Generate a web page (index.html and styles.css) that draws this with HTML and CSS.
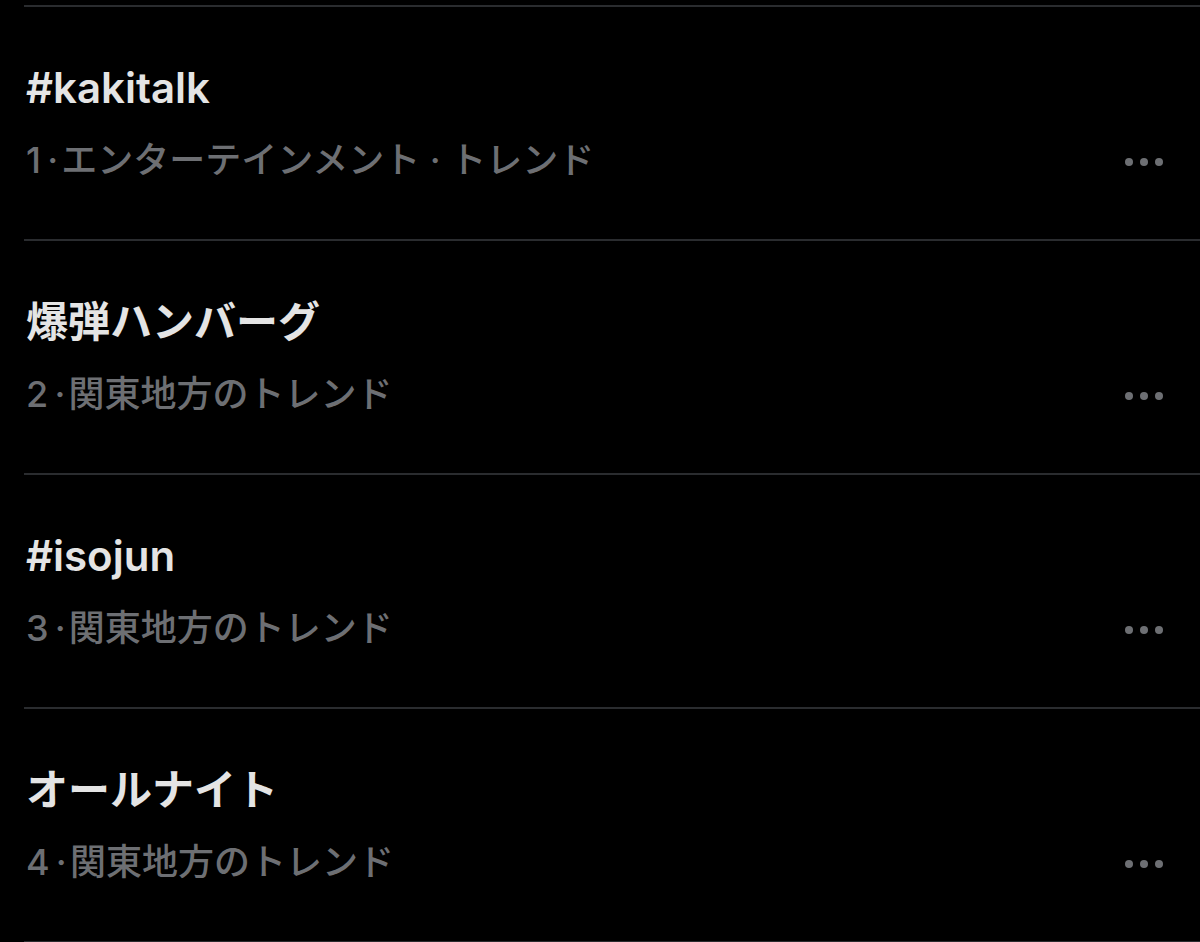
FILE: index.html
```html
<!DOCTYPE html>
<html lang="ja">
  <head>
    <meta charset="UTF-8" />
    <meta name="viewport" content="width=device-width, initial-scale=1.0" />
    <title>トレンド</title>
    <link rel="stylesheet" href="styles.css">
  </head>
  <body>
    <div class="trend-list">
      <div class="trend-item">
        <div class="trend-text">
          <div class="trend-title">#kakitalk</div>
          <div class="trend-meta">1&thinsp;·&hairsp;エンターテインメント · トレンド</div>
        </div>
        <button class="more-btn" aria-label="その他">
          <svg width="40" height="10" viewBox="0 0 40 10"><circle cx="5" cy="5" r="4" /><circle cx="20" cy="5" r="4" /><circle cx="35" cy="5" r="4" /></svg>
        </button>
      </div>

      <div class="trend-item">
        <div class="trend-text">
          <div class="trend-title">爆弾ハンバーグ</div>
          <div class="trend-meta">2&thinsp;·&hairsp;関東地方のトレンド</div>
        </div>
        <button class="more-btn" aria-label="その他">
          <svg width="40" height="10" viewBox="0 0 40 10"><circle cx="5" cy="5" r="4" /><circle cx="20" cy="5" r="4" /><circle cx="35" cy="5" r="4" /></svg>
        </button>
      </div>

      <div class="trend-item">
        <div class="trend-text">
          <div class="trend-title">#isojun</div>
          <div class="trend-meta">3&thinsp;·&hairsp;関東地方のトレンド</div>
        </div>
        <button class="more-btn" aria-label="その他">
          <svg width="40" height="10" viewBox="0 0 40 10"><circle cx="5" cy="5" r="4" /><circle cx="20" cy="5" r="4" /><circle cx="35" cy="5" r="4" /></svg>
        </button>
      </div>

      <div class="trend-item">
        <div class="trend-text">
          <div class="trend-title">オールナイト</div>
          <div class="trend-meta">4&thinsp;·&hairsp;関東地方のトレンド</div>
        </div>
        <button class="more-btn" aria-label="その他">
          <svg width="40" height="10" viewBox="0 0 40 10"><circle cx="5" cy="5" r="4" /><circle cx="20" cy="5" r="4" /><circle cx="35" cy="5" r="4" /></svg>
        </button>
      </div>
    </div>
  </body>
</html>
```

FILE: styles.css
```css
body {
  margin: 0;
  padding: 0;
  background-color: #000;
  font-family: Inter, "Noto Sans CJK JP", sans-serif;
  overflow: hidden;
}

.trend-list {
  padding: 5px 0 0 24px;
}

.trend-item {
  display: flex;
  align-items: flex-end;
  border-top: 2px solid #2a2c2f;
  padding: 56px 36px 54px 2px;
}

.trend-item:last-child {
  border-bottom: 2px solid #2a2c2f;
}

.trend-text {
  flex: 1;
  display: flex;
  flex-direction: column;
  gap: 22px;
}

.trend-title {
  font-size: 42px;
  line-height: 50px;
  font-weight: 600;
  color: #e4e4e4;
}

.trend-meta {
  font-size: 36px;
  line-height: 50px;
  font-weight: 500;
  color: #6d6f73;
}

.more-btn {
  background: none;
  border: none;
  padding: 0;
  margin-bottom: 15px;
  cursor: pointer;
  fill: #6d6f73;
}
```
